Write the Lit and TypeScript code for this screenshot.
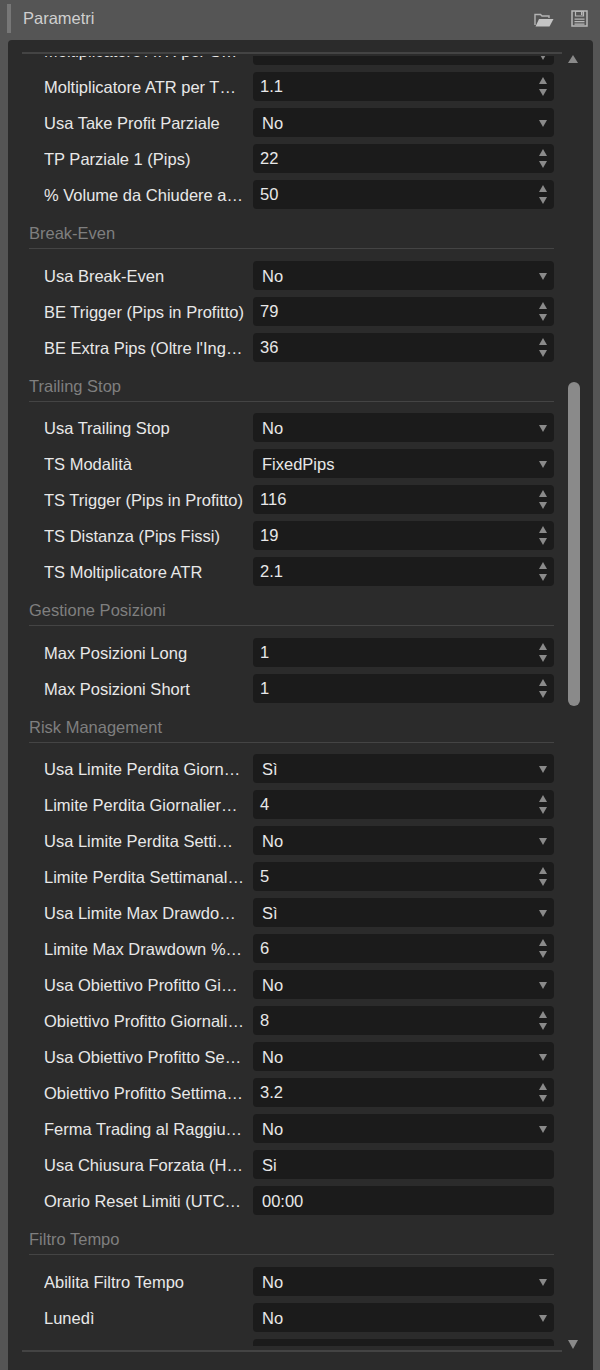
import { LitElement, css, html, nothing } from "lit";
import { customElement } from "lit/decorators.js";

type Row = { label: string; value: string; kind: "num" | "sel" | "text" };
type Section = { title?: string; rows: Row[] };

const num = (label: string, value: string): Row => ({ label, value, kind: "num" });
const sel = (label: string, value: string): Row => ({ label, value, kind: "sel" });
const text = (label: string, value: string): Row => ({ label, value, kind: "text" });

const sections: Section[] = [
  {
    rows: [
      num("Moltiplicatore ATR per S…", ""),
      num("Moltiplicatore ATR per T…", "1.1"),
      sel("Usa Take Profit Parziale", "No"),
      num("TP Parziale 1 (Pips)", "22"),
      num("% Volume da Chiudere a…", "50"),
    ],
  },
  {
    title: "Break-Even",
    rows: [
      sel("Usa Break-Even", "No"),
      num("BE Trigger (Pips in Profitto)", "79"),
      num("BE Extra Pips (Oltre l'Ing…", "36"),
    ],
  },
  {
    title: "Trailing Stop",
    rows: [
      sel("Usa Trailing Stop", "No"),
      sel("TS Modalità", "FixedPips"),
      num("TS Trigger (Pips in Profitto)", "116"),
      num("TS Distanza (Pips Fissi)", "19"),
      num("TS Moltiplicatore ATR", "2.1"),
    ],
  },
  {
    title: "Gestione Posizioni",
    rows: [num("Max Posizioni Long", "1"), num("Max Posizioni Short", "1")],
  },
  {
    title: "Risk Management",
    rows: [
      sel("Usa Limite Perdita Giorn…", "Sì"),
      num("Limite Perdita Giornalier…", "4"),
      sel("Usa Limite Perdita Setti…", "No"),
      num("Limite Perdita Settimanal…", "5"),
      sel("Usa Limite Max Drawdo…", "Sì"),
      num("Limite Max Drawdown %…", "6"),
      sel("Usa Obiettivo Profitto Gi…", "No"),
      num("Obiettivo Profitto Giornali…", "8"),
      sel("Usa Obiettivo Profitto Se…", "No"),
      num("Obiettivo Profitto Settima…", "3.2"),
      sel("Ferma Trading al Raggiu…", "No"),
      text("Usa Chiusura Forzata (H…", "Si"),
      text("Orario Reset Limiti (UTC…", "00:00"),
    ],
  },
  {
    title: "Filtro Tempo",
    rows: [sel("Abilita Filtro Tempo", "No"), sel("Lunedì", "No"), text("", "")],
  },
];

@customElement("app-root")
export class AppRoot extends LitElement {
  static styles = css`
    :host {
      display: block;
      width: 600px;
      height: 1370px;
      overflow: hidden;
      background: #555;
      font-family: "Liberation Sans", Arial, sans-serif;
      font-size: 16.5px;
    }
    .head {
      height: 40px;
      display: flex;
      align-items: center;
      box-sizing: border-box;
      padding: 0 12px 4px 7px;
    }
    .grip {
      width: 4px;
      height: 29px;
      background: #777;
      margin-right: 12px;
    }
    .title {
      flex: 1;
      color: #cfcfcf;
    }
    .head svg {
      display: block;
    }
    .open {
      margin: 3px 17px 0 0;
    }
    .panel {
      margin: 0 7px 0 8px;
      height: 1330px;
      box-sizing: border-box;
      background: #2b2b2b;
      border-radius: 4px 4px 0 0;
      display: flex;
      padding-top: 12px;
    }
    .main {
      width: 540px;
      margin-left: 14px;
      height: 1300px;
      display: flex;
      flex-direction: column;
    }
    .rule {
      flex: none;
      height: 2px;
      background: #444;
    }
    .view {
      flex: 1;
      overflow: hidden;
      margin: 2px 0 4px;
    }
    .content {
      margin-top: -20px;
      margin-left: 7px;
      width: 525px;
    }
    h3 {
      margin: 15px 0 11.6px;
      padding-bottom: 6px;
      height: 18px;
      line-height: 18px;
      font-size: inherit;
      font-weight: 400;
      color: #7f7f7f;
      border-bottom: 1px solid #444;
    }
    .row {
      display: flex;
      align-items: center;
      height: 29px;
      margin-bottom: 7px;
      padding-left: 15px;
      box-sizing: border-box;
    }
    .label {
      width: 209px;
      flex: none;
      margin-top: 2px;
      color: #e8e8e8;
      white-space: nowrap;
      overflow: hidden;
    }
    .field {
      flex: 1;
      height: 29px;
      box-sizing: border-box;
      background: #1b1b1b;
      border-radius: 4px;
      padding: 2px 7px 0 9px;
      display: flex;
      align-items: center;
      justify-content: space-between;
      color: #e8e8e8;
    }
    .field.num {
      padding: 0 7px;
    }
    .arrows {
      display: flex;
      flex-direction: column;
      gap: 5px;
    }
    .down,
    .up {
      width: 0;
      height: 0;
      border-left: 4px solid transparent;
      border-right: 4px solid transparent;
    }
    .down {
      border-top: 7px solid #8a8a8a;
    }
    .up {
      border-bottom: 7px solid #8a8a8a;
    }
    .bar {
      width: 25px;
      height: 1300px;
      position: relative;
    }
    .bar .up,
    .bar .down {
      position: absolute;
      left: 6px;
      border-left-width: 5.5px;
      border-right-width: 5.5px;
    }
    .bar .up {
      top: 3px;
      border-bottom-width: 8px;
    }
    .bar .down {
      bottom: 3px;
      border-top-width: 9px;
    }
    .thumb {
      position: absolute;
      left: 6px;
      top: 330px;
      width: 12px;
      height: 324px;
      border-radius: 6px;
      background: #8a8a8a;
    }
  `;

  private renderRow(r: Row) {
    return html`<div class="row">
      <div class="label">${r.label}</div>
      <div class="field ${r.kind}">
        <span>${r.value}</span>
        ${r.kind === "num"
          ? html`<div class="arrows"><div class="up"></div><div class="down"></div></div>`
          : r.kind === "sel"
            ? html`<div class="down"></div>`
            : nothing}
      </div>
    </div>`;
  }

  render() {
    return html`
      <div class="head">
        <div class="grip"></div>
        <div class="title">Parametri</div>
        <svg class="open" width="20" height="14" viewBox="0 0 20 14">
          <path d="M1 12V1.5h5.5L8 3h7v2" fill="none" stroke="#b4b4b4" stroke-width="1.4" />
          <path d="M1.5 13.5L5 6h14.5l-4 7.5z" fill="#c4c4c4" />
        </svg>
        <svg width="17" height="17" viewBox="0 0 17 17">
          <path d="M1 1h15v15H1z" fill="none" stroke="#b8b8b8" stroke-width="1.5" />
          <path d="M4.5 1.5h8v4.5h-8z" fill="none" stroke="#b8b8b8" stroke-width="1.2" />
          <path d="M10 2h1.5v3H10zM3.5 8.5h10v1.3h-10zM3.5 11h10v1.3h-10zM3.5 13.4h10v1.3h-10z" fill="#b8b8b8" />
        </svg>
      </div>
      <div class="panel">
        <div class="main">
          <div class="rule"></div>
          <div class="view">
            <div class="content">
              ${sections.map(
                (s) => html`${s.title ? html`<h3>${s.title}</h3>` : nothing}${s.rows.map((r) => this.renderRow(r))}`
              )}
            </div>
          </div>
          <div class="rule"></div>
        </div>
        <div class="bar">
          <div class="up"></div>
          <div class="thumb"></div>
          <div class="down"></div>
        </div>
      </div>
    `;
  }
}
